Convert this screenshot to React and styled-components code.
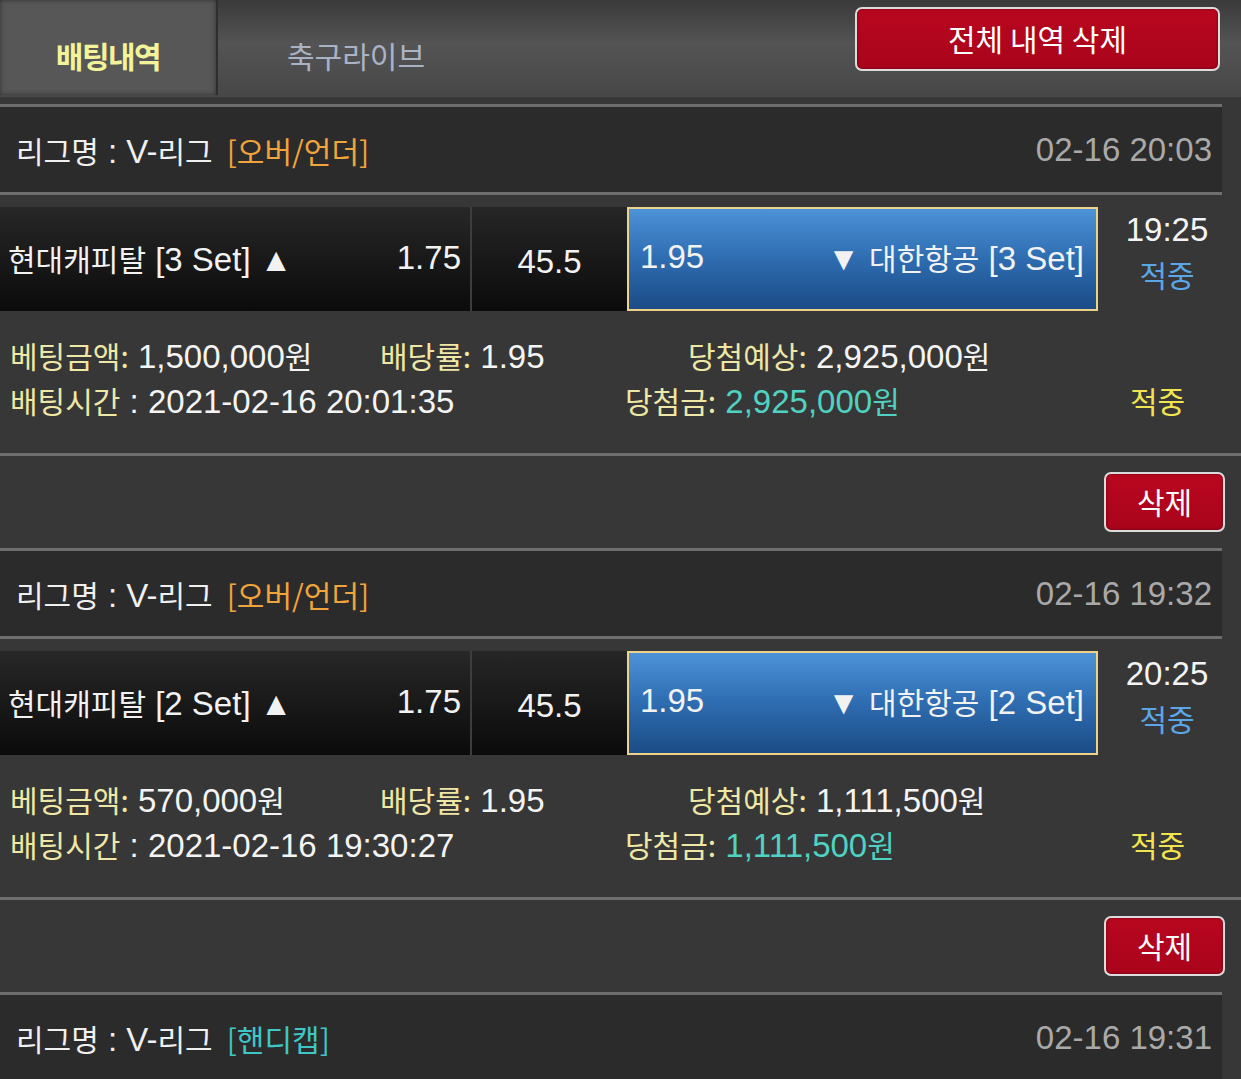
import React from "react";
import styled, { createGlobalStyle, css } from "styled-components";

const KO = '"Noto Sans CJK KR", sans-serif';

const Global = createGlobalStyle`
  *, *::before, *::after { box-sizing: border-box; }
  html, body { margin: 0; padding: 0; background: #373737; }
  body {
    font-family: "Liberation Sans", Arial, "Noto Sans CJK KR", sans-serif;
    font-size: 33px;
    color: #f2f2f2;
    overflow: hidden;
  }
`;

const Page = styled.div`
  width: 1241px;
  min-height: 1079px;
  background: #373737;
`;

const Header = styled.header`
  display: flex;
  align-items: flex-start;
  height: 97px;
  margin-bottom: 7px;
  background: linear-gradient(#3a3a3a 0%, #545454 45%, #474747 100%);
`;

const Tab = styled.div`
  width: ${(p) => p.$w}px;
  height: 95px;
  display: flex;
  align-items: center;
  justify-content: center;
  font-family: ${KO};
  font-size: 30px;
  padding-top: 14px;
  ${(p) =>
    p.$active
      ? css`
          background: #575757;
          color: #f3f39a;
          font-weight: 700;
          letter-spacing: -1.5px;
          box-shadow: inset 0 0 5px rgba(0, 0, 0, 0.45), 2px 0 0 #2e2e2e;
        `
      : css`
          color: #aab3c6;
          padding-left: 0;
        `}
`;

const RedButton = styled.button`
  display: flex;
  align-items: center;
  justify-content: center;
  width: ${(p) => p.$w}px;
  height: ${(p) => p.$h}px;
  border: 2px solid #dcdcdc;
  border-radius: 7px;
  background: linear-gradient(#b8071f, #a9041b);
  color: #ffffff;
  font-family: ${KO};
  font-size: 30px;
  padding: 0 0 3px;
  cursor: pointer;
  box-shadow: inset 0 0 3px rgba(0, 0, 0, 0.4);
`;

const HeaderButtonSlot = styled.div`
  margin: 7px 21px 0 auto;
`;

const Card = styled.section`
  width: 1222px;
`;

const LeagueBar = styled.div`
  height: 91px;
  border-top: 3px solid #6e6e6e;
  border-bottom: 3px solid #6e6e6e;
  background: #2b2b2b;
  display: flex;
  align-items: center;
  justify-content: space-between;
  padding: 0 10px 0 16px;
`;

const LeagueName = styled.div`
  color: #f0f0f0;
  display: flex;
  align-items: baseline;
  gap: 14px;
`;

const Tag = styled.span`
  color: ${(p) => p.$color};
  font-family: ${KO};
  font-size: 30px;
`;

const Ko = styled.span`
  font-family: ${KO};
  font-size: 30px;
`;

const DateText = styled.span`
  color: #a9a9a9;
`;

const BetRow = styled.div`
  margin-top: 12px;
  height: 104px;
  display: flex;
`;

const HomeCell = styled.div`
  width: 472px;
  display: flex;
  align-items: center;
  justify-content: space-between;
  padding: 0 9px 2px 8px;
  background: linear-gradient(#272727, #0b0b0b);
  border-right: 2px solid #3d3d3d;
`;

const LineCell = styled.div`
  width: 155px;
  display: flex;
  align-items: center;
  justify-content: center;
  padding-top: 6px;
  background: linear-gradient(#262626, #0b0b0b);
`;

const AwayBox = styled.div`
  width: 471px;
  display: flex;
  align-items: center;
  justify-content: space-between;
  padding: 0 12px 4px 11px;
  border: 2px solid #efd28a;
  background: linear-gradient(#4d92d8 0%, #2e6cb0 50%, #1b4c86 100%);
`;

const ResultCol = styled.div`
  flex: 1;
  display: flex;
  flex-direction: column;
  align-items: center;
  padding-left: 14px;
  line-height: 45px;
`;

const ResultText = styled.span`
  color: ${(p) => p.$color};
  font-family: ${(p) => (p.$ko ? KO : "inherit")};
  font-size: ${(p) => (p.$ko ? "30px" : "33px")};
`;

const Info = styled.div`
  height: 142px;
  padding-top: 22px;
`;

const InfoLine = styled.div`
  display: grid;
  grid-template-columns: ${(p) => p.$cols};
  padding-left: 10px;
  height: 45px;
  line-height: 45px;
  white-space: nowrap;
`;

const Label = styled.span`
  color: ${(p) => p.$color || "#efe7a6"};
  font-family: ${KO};
  font-size: 30px;
`;

const Value = styled.span`
  color: ${(p) => p.$color || "#f4f4f4"};
`;

const DeleteRow = styled.div`
  height: 95px;
  border-top: 3px solid #6e6e6e;
  display: flex;
  align-items: center;
  justify-content: flex-end;
  padding: 0 16px 0 0;
`;

const bets = [
  {
    type: "[오버/언더]",
    typeColor: "#f2a43c",
    date: "02-16 20:03",
    detail: {
      set: "[3 Set]",
      time: "19:25",
      amount: "1,500,000",
      expected: "2,925,000",
      betTime: "2021-02-16 20:01:35",
      win: "2,925,000",
    },
  },
  {
    type: "[오버/언더]",
    typeColor: "#f2a43c",
    date: "02-16 19:32",
    detail: {
      set: "[2 Set]",
      time: "20:25",
      amount: "570,000",
      expected: "1,111,500",
      betTime: "2021-02-16 19:30:27",
      win: "1,111,500",
    },
  },
  {
    type: "[핸디캡]",
    typeColor: "#3fc6c6",
    date: "02-16 19:31",
    detail: null,
  },
];

function BetDetail({ d }) {
  return (
    <>
      <BetRow>
        <HomeCell>
          <span>
            <Ko>현대캐피탈</Ko> {d.set} ▲
          </span>
          <span>1.75</span>
        </HomeCell>
        <LineCell>45.5</LineCell>
        <AwayBox>
          <span>1.95</span>
          <span>
            ▼ <Ko>대한항공</Ko> {d.set}
          </span>
        </AwayBox>
        <ResultCol>
          <ResultText $color="#f4f4f4">{d.time}</ResultText>
          <ResultText $color="#5aa6e6" $ko>
            적중
          </ResultText>
        </ResultCol>
      </BetRow>
      <Info>
        <InfoLine $cols="370px 308px 1fr">
          <span>
            <Label>베팅금액:</Label> <Value>{d.amount}<Ko>원</Ko></Value>
          </span>
          <span>
            <Label>배당률:</Label> <Value>1.95</Value>
          </span>
          <span>
            <Label>당첨예상:</Label> <Value>{d.expected}<Ko>원</Ko></Value>
          </span>
        </InfoLine>
        <InfoLine $cols="615px 505px 1fr">
          <span>
            <Label>배팅시간</Label> <Value>: {d.betTime}</Value>
          </span>
          <span>
            <Label>당첨금:</Label> <Value $color="#4fd2c2">{d.win}<Ko>원</Ko></Value>
          </span>
          <span>
            <Label $color="#f2e450">적중</Label>
          </span>
        </InfoLine>
      </Info>
    </>
  );
}

function BetCard({ b }) {
  return (
    <>
      <Card>
        <LeagueBar>
          <LeagueName>
            <span>
              <Ko>리그명</Ko> : V-<Ko>리그</Ko>
            </span>
            <Tag $color={b.typeColor}>{b.type}</Tag>
          </LeagueName>
          <DateText>{b.date}</DateText>
        </LeagueBar>
        {b.detail && <BetDetail d={b.detail} />}
      </Card>
      {b.detail && (
        <DeleteRow>
          <RedButton $w={121} $h={60}>삭제</RedButton>
        </DeleteRow>
      )}
    </>
  );
}

export default function App() {
  return (
    <Page>
      <Global />
      <Header>
        <Tab $w={216} $active>
          배팅내역
        </Tab>
        <Tab $w={280}>축구라이브</Tab>
        <HeaderButtonSlot>
          <RedButton $w={365} $h={64}>전체 내역 삭제</RedButton>
        </HeaderButtonSlot>
      </Header>
      {bets.map((b, i) => (
        <BetCard key={i} b={b} />
      ))}
    </Page>
  );
}
